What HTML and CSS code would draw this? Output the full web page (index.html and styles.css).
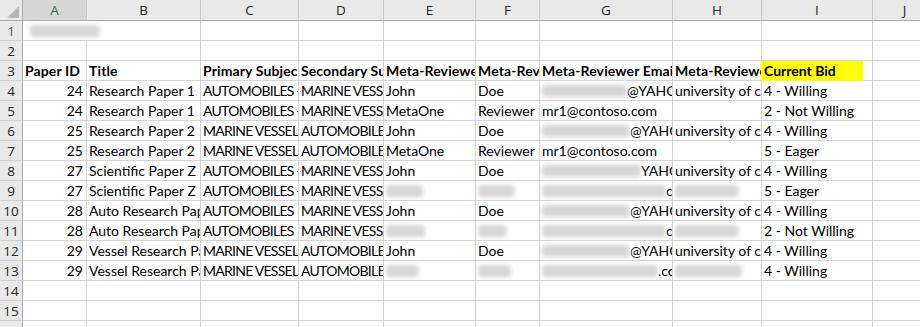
FILE: index.html
```html
<!DOCTYPE html>
<html>
<head>
<meta charset="utf-8">
<link rel="stylesheet" href="styles.css">
</head>
<body>
<div class="sheet">
  <div class="corner"><svg width="23" height="21" viewBox="0 0 23 21"><polygon points="7,18 19,18 19,6" fill="#b8b8b8"/></svg></div>
  <div class="ch selcol">A</div><div class="ch">B</div><div class="ch">C</div><div class="ch">D</div><div class="ch">E</div><div class="ch">F</div><div class="ch">G</div><div class="ch">H</div><div class="ch">I</div><div class="ch">J</div>

  <div class="rh selrow">1</div><div class="c span2"><span class="blur w70"></span></div><div class="c"></div><div class="c"></div><div class="c"></div><div class="c"></div><div class="c"></div><div class="c"></div><div class="c"></div><div class="c"></div>

  <div class="rh">2</div><div class="c"></div><div class="c"></div><div class="c"></div><div class="c"></div><div class="c"></div><div class="c"></div><div class="c"></div><div class="c"></div><div class="c"></div><div class="c"></div>

  <div class="rh">3</div><div class="c b">Paper ID</div><div class="c b">Title</div><div class="c b">Primary Subject</div><div class="c b">Secondary Subject</div><div class="c b">Meta-Reviewer First Name</div><div class="c b">Meta-Reviewer Last Name</div><div class="c b">Meta-Reviewer Email</div><div class="c b yl-left">Meta-Reviewer Organization</div><div class="c b hl">Current Bid</div><div class="c"></div>

  <div class="rh">4</div><div class="c n">24</div><div class="c">Research Paper 1</div><div class="c u">AUTOMOBILES - CARS</div><div class="c u">MARINE VESSELS</div><div class="c">John</div><div class="c">Doe</div><div class="c"><span class="blur w87"></span>@YAHOO.COM</div><div class="c">university of california</div><div class="c">4 - Willing</div><div class="c"></div>

  <div class="rh">5</div><div class="c n">24</div><div class="c">Research Paper 1</div><div class="c u">AUTOMOBILES - CARS</div><div class="c u">MARINE VESSELS</div><div class="c">MetaOne</div><div class="c">Reviewer</div><div class="c">mr1@contoso.com</div><div class="c"></div><div class="c">2 - Not Willing</div><div class="c"></div>

  <div class="rh">6</div><div class="c n">25</div><div class="c">Research Paper 2</div><div class="c u">MARINE VESSELS</div><div class="c u">AUTOMOBILES - CARS</div><div class="c">John</div><div class="c">Doe</div><div class="c"><span class="blur w90"></span>@YAHOO.COM</div><div class="c">university of california</div><div class="c">4 - Willing</div><div class="c"></div>

  <div class="rh">7</div><div class="c n">25</div><div class="c">Research Paper 2</div><div class="c u">MARINE VESSELS</div><div class="c u">AUTOMOBILES - CARS</div><div class="c">MetaOne</div><div class="c">Reviewer</div><div class="c">mr1@contoso.com</div><div class="c"></div><div class="c">5 - Eager</div><div class="c"></div>

  <div class="rh">8</div><div class="c n">27</div><div class="c">Scientific Paper Z</div><div class="c u">AUTOMOBILES - CARS</div><div class="c u">MARINE VESSELS</div><div class="c">John</div><div class="c">Doe</div><div class="c"><span class="blur w99"></span>YAHOO.COM</div><div class="c">university of california</div><div class="c">4 - Willing</div><div class="c"></div>

  <div class="rh">9</div><div class="c n">27</div><div class="c">Scientific Paper Z</div><div class="c u">AUTOMOBILES - CARS</div><div class="c u">MARINE VESSELS</div><div class="c"><span class="blur w37"></span></div><div class="c"><span class="blur w37"></span></div><div class="c"><span class="blur w124"></span>com</div><div class="c"><span class="blur w64"></span></div><div class="c">5 - Eager</div><div class="c"></div>

  <div class="rh">10</div><div class="c n">28</div><div class="c">Auto Research Paper</div><div class="c u">AUTOMOBILES</div><div class="c u">MARINE VESSELS</div><div class="c">John</div><div class="c">Doe</div><div class="c"><span class="blur w90"></span>@YAHOO.COM</div><div class="c">university of california</div><div class="c">4 - Willing</div><div class="c"></div>

  <div class="rh">11</div><div class="c n">28</div><div class="c">Auto Research Paper</div><div class="c u">AUTOMOBILES</div><div class="c u">MARINE VESSELS</div><div class="c"><span class="blur w39"></span></div><div class="c"><span class="blur w29"></span></div><div class="c"><span class="blur w124"></span>com</div><div class="c"><span class="blur w64"></span></div><div class="c">2 - Not Willing</div><div class="c"></div>

  <div class="rh">12</div><div class="c n">29</div><div class="c">Vessel Research Paper</div><div class="c u">MARINE VESSELS</div><div class="c u">AUTOMOBILES - CARS</div><div class="c">John</div><div class="c">Doe</div><div class="c"><span class="blur w88"></span>@YAHOO.COM</div><div class="c">university of california</div><div class="c">4 - Willing</div><div class="c"></div>

  <div class="rh">13</div><div class="c n">29</div><div class="c">Vessel Research Paper</div><div class="c u">MARINE VESSELS</div><div class="c u">AUTOMOBILES - CARS</div><div class="c"><span class="blur w33"></span></div><div class="c"><span class="blur w33"></span></div><div class="c"><span class="blur w116"></span>.com</div><div class="c"><span class="blur w67"></span></div><div class="c">4 - Willing</div><div class="c"></div>

  <div class="rh">14</div><div class="c"></div><div class="c"></div><div class="c"></div><div class="c"></div><div class="c"></div><div class="c"></div><div class="c"></div><div class="c"></div><div class="c"></div><div class="c"></div>

  <div class="rh">15</div><div class="c"></div><div class="c"></div><div class="c"></div><div class="c"></div><div class="c"></div><div class="c"></div><div class="c"></div><div class="c"></div><div class="c"></div><div class="c"></div>

  <div class="rh">16</div><div class="c"></div><div class="c"></div><div class="c"></div><div class="c"></div><div class="c"></div><div class="c"></div><div class="c"></div><div class="c"></div><div class="c"></div><div class="c"></div>
</div>
</body>
</html>
```

FILE: styles.css
```css
html, body {
  margin: 0;
  padding: 0;
  background: #ffffff;
  overflow: hidden;
}

.sheet {
  display: grid;
  grid-template-columns: 23px 64px 114px 98px 85px 92px 64px 133px 89px 111px 64px;
  grid-template-rows: 21px;
  grid-auto-rows: 20px;
  width: 937px;
  font-family: Lato, "Liberation Sans", sans-serif;
  font-size: 14px;
  color: #000000;
}

.sheet > div {
  box-sizing: border-box;
}

.corner {
  background: #e9e9e9;
  border-right: 1px solid #ababab;
  border-bottom: 1px solid #ababab;
}

.corner svg {
  display: block;
}

.ch {
  background: #e9e9e9;
  border-right: 1px solid #c9c9c9;
  border-bottom: 1px solid #ababab;
  text-align: center;
  font-family: "Open Sans", "Noto Sans", sans-serif;
  font-size: 13.5px;
  line-height: 21px;
  color: #262626;
}

.ch.selcol {
  background: #d6d6d6;
  color: #217346;
}

.rh {
  background: #e9e9e9;
  border-right: 1px solid #ababab;
  border-bottom: 1px solid #d0d0d0;
  text-align: center;
  font-family: "Open Sans", "Noto Sans", sans-serif;
  font-size: 13.5px;
  line-height: 20px;
  color: #262626;
}

.rh.selrow {
  color: #217346;
}

.c {
  border-right: 1px solid #d4d4d4;
  border-bottom: 1px solid #d4d4d4;
  padding: 0 0 0 2px;
  line-height: 20px;
  white-space: nowrap;
  overflow: hidden;
}

.c.u {
  letter-spacing: -0.72px;
  word-spacing: -0.3px;
}

.c.span2 {
  grid-column: span 2;
  padding-left: 7px;
}

.c.n {
  text-align: right;
  padding: 0 3px 0 0;
}

.c.b {
  font-weight: 700;
  letter-spacing: 0.12px;
}

.c.yl-left {
  border-right-color: #ffff00;
}

.c.hl {
  background: linear-gradient(to right, #ffff00 101px, #ffffff 101px);
  border-image: linear-gradient(to right, #ffff00 101px, #d4d4d4 101px) 1;
  letter-spacing: 0;
}

.blur {
  display: inline-block;
  height: 12px;
  vertical-align: -1px;
  background: #d6d6d6;
  border-radius: 3px;
  filter: blur(2px);
}

.w29 { width: 29px; }
.w33 { width: 33px; }
.w37 { width: 37px; }
.w39 { width: 39px; }
.w64 { width: 64px; }
.w67 { width: 67px; }
.w70 { width: 70px; }
.w87 { width: 85px; }
.w88 { width: 88px; }
.w90 { width: 88px; }
.w99 { width: 99px; }
.w116 { width: 116px; }
.w124 { width: 124px; }
```
